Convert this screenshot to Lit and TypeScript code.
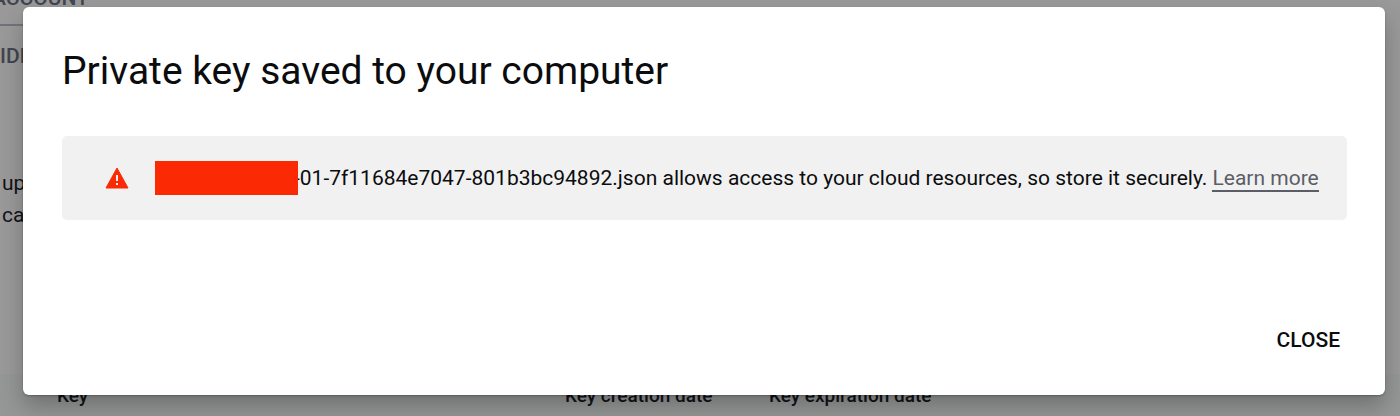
import { LitElement, html, css } from "lit";
import { customElement } from "lit/decorators.js";

@customElement("service-account-page")
class ServiceAccountPage extends LitElement {
  static styles = css`
    :host {
      display: block;
      color: #111318;
      font-size: 21px;
      line-height: 32px;
    }
    .tab {
      height: 24px;
      margin: -14px 40px 0 -8px;
      padding-bottom: 14px;
      line-height: 24px;
      font-weight: 500;
      color: #41454f;
      border-bottom: 2px solid #70747a;
    }
    .action {
      padding-top: 14px;
      font-weight: 500;
      color: #41454f;
    }
    .copy {
      margin: 0;
      padding: 95px 0 0 2px;
    }
    .keys {
      width: 100%;
      margin-top: 143px;
      border-spacing: 0;
      table-layout: fixed;
      background: #959696;
      font-size: 19px;
      line-height: 44px;
    }
    th {
      padding: 0;
      text-align: left;
      font-weight: 500;
    }
    .key {
      width: 508px;
      padding-left: 57px;
    }
    .created {
      width: 204px;
    }
  `;

  render() {
    return html`
      <div class="tab">ACCOUNT</div>
      <div class="action">IDE</div>
      <p class="copy">up<br />ca</p>
      <table class="keys">
        <thead>
          <tr>
            <th class="key" scope="col">Key</th>
            <th class="created" scope="col">Key creation date</th>
            <th scope="col">Key expiration date</th>
          </tr>
        </thead>
      </table>
    `;
  }
}

@customElement("key-saved-dialog")
class KeySavedDialog extends LitElement {
  static styles = css`
    :host {
      display: block;
      box-sizing: border-box;
      padding: 40px 38px 34px 39px;
      border-radius: 6px;
      background: #fff;
      color: #0b0c0e;
      box-shadow: 0 12px 22px rgba(0, 0, 0, 0.24), 0 1px 2px rgba(0, 0, 0, 0.25);
    }
    h1 {
      margin: 0;
      font-size: 39px;
      line-height: 48px;
      font-weight: 400;
    }
    .notice {
      display: flex;
      align-items: center;
      margin-top: 41px;
      padding: 25px 20px 25px 43px;
      border-radius: 5px;
      background: #f1f1f1;
      font-size: 21px;
      line-height: 34px;
    }
    .warning {
      flex: none;
      width: 24px;
      height: 22px;
      margin-right: 26px;
    }
    .redacted {
      flex: none;
      z-index: 1;
      width: 143px;
      height: 34px;
      margin-right: -4px;
      background: #fb2a04;
    }
    p {
      margin: 0;
    }
    a {
      color: #5b5e66;
      text-decoration: none;
      border-bottom: 2px solid #5b5e66;
    }
    .actions {
      display: flex;
      justify-content: flex-end;
      margin-top: 99px;
    }
    button {
      padding: 4px 7px;
      border: 0;
      background: none;
      color: inherit;
      font: 500 21px/34px Roboto, sans-serif;
    }
  `;

  render() {
    return html`
      <h1>Private key saved to your computer</h1>
      <div class="notice">
        <svg class="warning" viewBox="0 0 24 22" aria-hidden="true">
          <path d="M12 1 23 21H1Z" fill="#fb2a04" stroke="#fb2a04" stroke-linejoin="round" />
          <path d="M11 8h2v6h-2zM11 16h2v2h-2z" fill="#f1f1f1" />
        </svg>
        <span class="redacted"></span>
        <p>
          -01-7f11684e7047-801b3bc94892.json allows access to your cloud resources, so store it
          securely. <a href="#">Learn more</a>
        </p>
      </div>
      <div class="actions"><button type="button">CLOSE</button></div>
    `;
  }
}

@customElement("app-root")
class AppRoot extends LitElement {
  static styles = css`
    :host {
      display: block;
      position: relative;
      min-height: 100vh;
      overflow: hidden;
      background: #999;
      font-family: Roboto, sans-serif;
    }
    .dialog {
      position: absolute;
      top: 7px;
      left: 23px;
      right: 15px;
    }
  `;

  render() {
    return html`
      <service-account-page></service-account-page>
      <key-saved-dialog class="dialog" role="dialog" aria-label="Private key saved to your computer"></key-saved-dialog>
    `;
  }
}
